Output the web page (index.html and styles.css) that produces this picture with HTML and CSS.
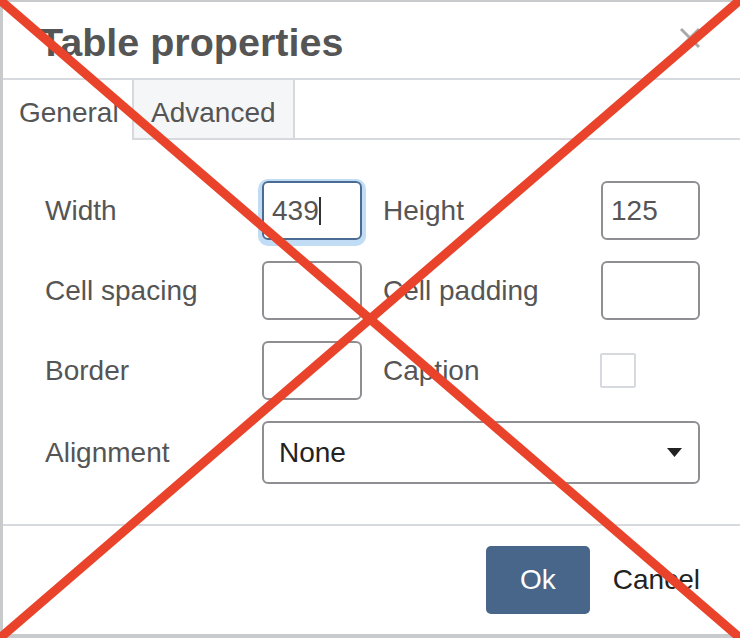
FILE: index.html
```html
<!DOCTYPE html>
<html>
<head>
<meta charset="utf-8">
<link rel="stylesheet" href="styles.css">
</head>
<body>
<div class="stage">
  <div class="dialog">
    <div class="header">
      <h1 class="title">Table properties</h1>
      <button class="close" aria-label="Close">
        <svg width="22" height="22" viewBox="0 0 22 22"><path d="M2 2 L20 20 M20 2 L2 20" stroke="#a9a9a9" stroke-width="3" fill="none"/></svg>
      </button>
    </div>
    <div class="tabs">
      <div class="tab tab-active">General</div>
      <div class="tab tab-idle">Advanced</div>
      <div class="tab-fill"></div>
    </div>
    <div class="body">
      <div class="form">
        <label class="label">Width</label>
        <div class="input input-focus"><span>439</span><span class="caret"></span></div>
        <label class="label label-right">Height</label>
        <div class="input">125</div>

        <label class="label">Cell spacing</label>
        <div class="input"></div>
        <label class="label label-right">Cell padding</label>
        <div class="input"></div>

        <label class="label">Border</label>
        <div class="input"></div>
        <label class="label label-right">Caption</label>
        <div class="check-cell"><div class="checkbox"></div></div>

        <label class="label">Alignment</label>
        <div class="select">
          <span>None</span>
          <svg class="select-caret" width="15" height="9" viewBox="0 0 15 9"><path d="M0 0 H15 L7.5 9 Z" fill="#222"/></svg>
        </div>
      </div>
    </div>
    <div class="footer">
      <button class="btn-ok">Ok</button>
      <button class="btn-cancel">Cancel</button>
    </div>
  </div>
  <svg class="cross" width="740" height="638" viewBox="0 0 740 638">
    <line x1="0" y1="0" x2="740" y2="638" stroke="#e9442b" stroke-width="9"/>
    <line x1="740" y1="0" x2="0" y2="638" stroke="#e9442b" stroke-width="9"/>
  </svg>
</div>
</body>
</html>
```
FILE: styles.css
```css
* { box-sizing: border-box; }
html, body { margin: 0; padding: 0; }
body {
  font-family: "Liberation Sans", Arial, sans-serif;
  background: #fff;
}
.stage {
  position: relative;
  width: 740px;
  height: 638px;
  overflow: hidden;
  background: #c9cacc;
  padding: 2px 0 4px 3px;
}
.dialog {
  background: #fff;
  height: 632px;
  display: flex;
  flex-direction: column;
}
.header {
  display: flex;
  justify-content: space-between;
  align-items: flex-start;
  padding: 17px 39px 13px 36px;
  border-bottom: 2px solid #d6dadf;
  height: 78px;
}
.title {
  margin: 0;
  font-size: 39.5px;
  line-height: 46px;
  font-weight: bold;
  color: #555;
}
.close {
  border: 0;
  background: none;
  padding: 0;
  margin-top: 8px;
  width: 22px;
  height: 22px;
  display: block;
}
.close svg { display: block; }
.tabs {
  display: flex;
  height: 60px;
}
.tab {
  font-size: 28px;
  line-height: 32px;
  padding: 17px 16px 9px 16px;
  color: #555;
  border-bottom: 2px solid #d6dadf;
}
.tab-active {
  border-bottom-color: transparent;
  background: #fff;
  width: 129px;
}
.tab-idle {
  background: #f5f6f8;
  border-left: 2px solid #d6dadf;
  border-right: 2px solid #d6dadf;
  padding: 17px 17px 9px 17px;
}
.tab-fill {
  flex: 1;
  border-bottom: 2px solid #d6dadf;
}
.body {
  padding: 41px 0 40px 42px;
  height: 384px;
}
.form {
  display: grid;
  grid-template-columns: 217px 100px 239px 99px;
  grid-template-rows: 59px 59px 59px 63px;
  row-gap: 21px;
  align-items: center;
}
.label {
  font-size: 28px;
  line-height: 32px;
  color: #555;
}
.label-right { padding-left: 21px; }
.input {
  height: 59px;
  border: 2px solid #8e8e93;
  border-radius: 6px;
  padding-left: 8px;
  font-size: 28px;
  color: #555;
  display: flex;
  align-items: center;
}
.input-focus {
  border-color: #4a6c93;
  box-shadow: 0 2px 0 4px #c1dcf5;
}
.caret {
  display: inline-block;
  width: 2px;
  height: 28px;
  background: #333;
}
.check-cell {
  display: flex;
  align-items: center;
  margin-left: -1px;
}
.checkbox {
  width: 36px;
  height: 35px;
  border: 2px solid #d6dadf;
  border-radius: 2px;
  background: #fff;
}
.select {
  grid-column: 2 / 5;
  height: 63px;
  border: 2px solid #8e8e93;
  border-radius: 6px;
  padding: 0 16px 0 15px;
  font-size: 28px;
  color: #222;
  display: flex;
  align-items: center;
  justify-content: space-between;
}
.select-caret { display: block; }
.footer {
  border-top: 2px solid #d6dadf;
  height: 110px;
  display: flex;
  justify-content: flex-end;
  align-items: center;
  padding-right: 40px;
  gap: 23px;
}
.btn-ok {
  width: 104px;
  height: 68px;
  background: #476689;
  color: #fff;
  border: 0;
  border-radius: 5px;
  font-family: "Liberation Sans", Arial, sans-serif;
  font-size: 28px;
  padding: 0;
}
.btn-cancel {
  background: none;
  border: 0;
  padding: 0;
  color: #222;
  font-family: "Liberation Sans", Arial, sans-serif;
  font-size: 28px;
}
.cross {
  position: absolute;
  left: 0;
  top: 0;
  pointer-events: none;
}
```
